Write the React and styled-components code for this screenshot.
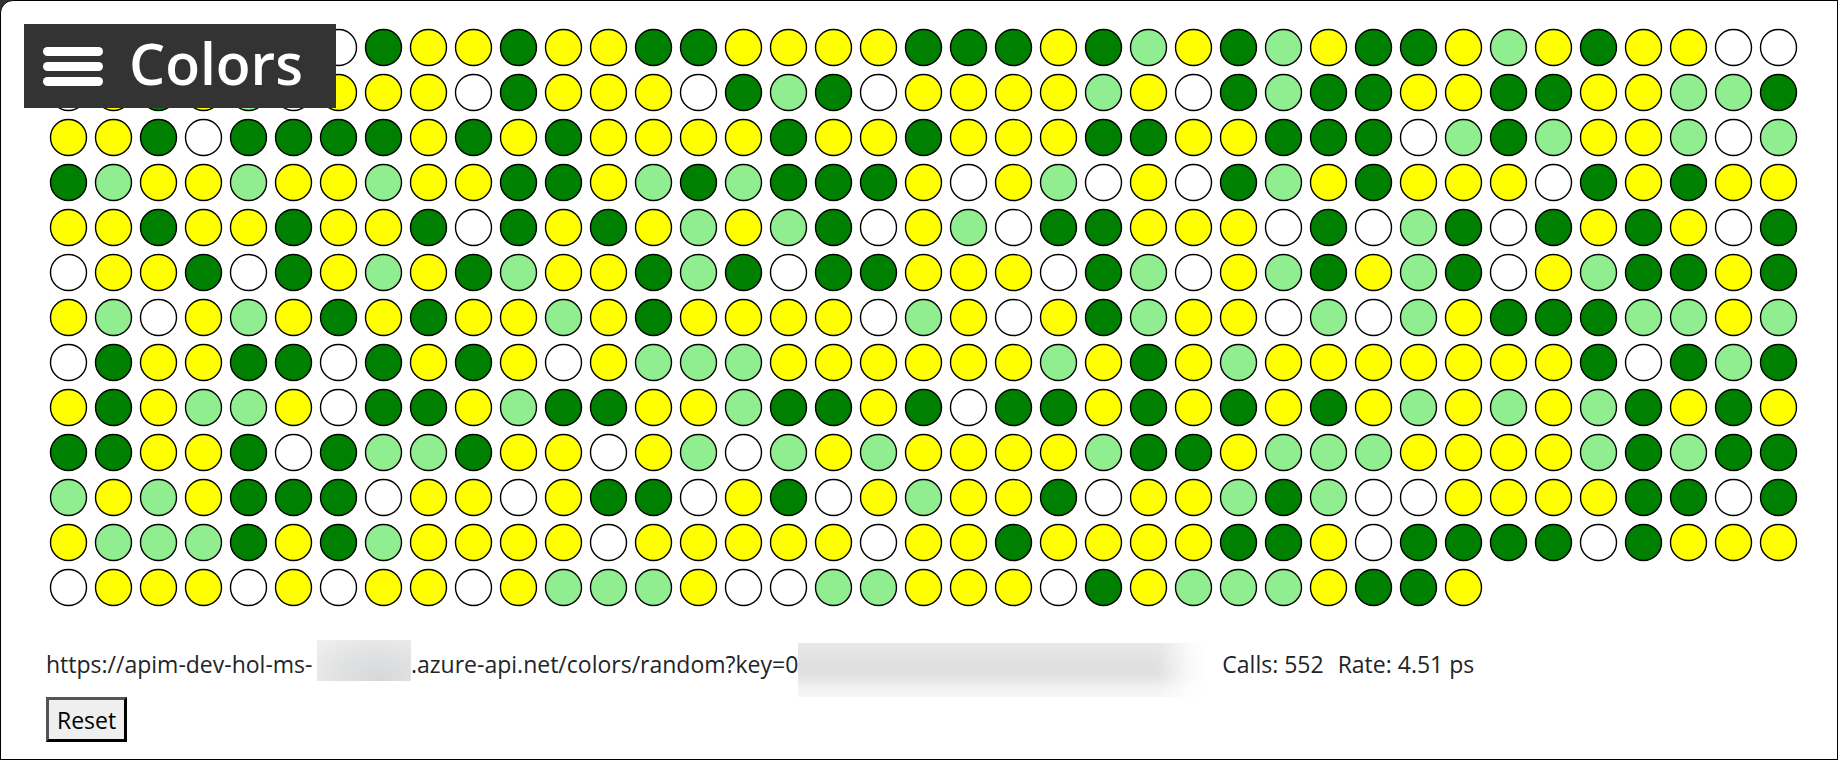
import React, { useState } from "react";
import styled, { createGlobalStyle } from "styled-components";

const FILLS = { Y: "yellow", G: "green", L: "lightgreen", W: "white" };

const SAMPLES = [
  "WYGYLWWGYYGYYGGYYYYGGGYGLYGLYGGYLYGYYWW",
  "WYGYLWYYYWGYYYWGLGWYYYYLYWGLGGYYGGYYLLG",
  "YYGWGGGGYGYGYYYYGYYGYYYGGYYGGGWLGLYYLWL",
  "GLYYLYYLYYGGYLGLGGGYWYLWYWGLYGYYYWGYGYY",
  "YYGYYGYYGWGYGYLYLGWYLWGGYYYWGWLGWGYGYWG",
  "WYYGWGYLYGLYYGLGWGGYYYWGLWYLGYLGWYLGGYG",
  "YLWYLYGYGYYLYGYYYYWLYWYGLYYWLWLYGGGLLYL",
  "WGYYGGWGYGYWYLLLYYYYYYLYGYLYYYYYYYGWGLG",
  "YGYLLYWGGYLGGYYLGGYGWGGYGYGYGYLYLYLGYGY",
  "GGYYGWGLLGYYWYLWLYLYYYYLGGYLLLYYYYLGLGG",
  "LYLYGGGWYYWYGGWYGWYLYYGWYYLGLWWYYYYGGWG",
  "YLLLGYGLYYYYWYYYYYWYYGYYYYGGYWGGGGWGYYY",
  "WYYYWYWYYWYLLLYWWLLYYYWGYLLLYGGY",
].join("");

const GlobalStyle = createGlobalStyle`
  * { box-sizing: border-box; }
  body {
    margin: 0;
    background: #333;
    color: #212529;
    font-family: "Open Sans", "Noto Sans", sans-serif;
    font-size: 23px;
    line-height: 36px;
  }
`;

const Page = styled.div`
  position: relative;
  min-height: 100vh;
  padding: 27px 36px 16px 45px;
  border: 1px solid #000;
  border-top-left-radius: 13px;
  background: #fff;
`;

const Header = styled.header`
  position: absolute;
  top: 23px;
  left: 23px;
  display: flex;
  align-items: center;
  gap: 26px;
  height: 84px;
  padding: 0 33px 0 19px;
  background: #333;
  color: #fff;
`;

const MenuButton = styled.button`
  display: flex;
  flex-direction: column;
  gap: 6px;
  width: 60px;
  padding: 0;
  border: 0;
  background: none;
  cursor: pointer;
`;

const MenuBar = styled.span`
  height: 9px;
  border-radius: 5px;
  background: #fff;
`;

const Title = styled.h1`
  margin: 0;
  padding-bottom: 6px;
  font-size: 57px;
  font-weight: 600;
  line-height: 78px;
`;

const Dots = styled.div`
  display: flex;
  flex-wrap: wrap;
  gap: 6px;
  min-height: 39px;
  padding-left: 3px;
`;

const DotShape = styled.svg`
  width: 39px;
  height: 39px;
  fill: ${({ $fill }) => $fill};
  stroke: #000;
`;

const Status = styled.div`
  display: flex;
  align-items: flex-start;
  margin-top: 33px;
  white-space: nowrap;
`;

const StatusText = styled.span`
  flex: none;
  min-width: 271px;
  padding-top: 6px;
`;

const Stats = styled.div`
  display: flex;
  gap: 14px;
  padding: 6px 0 0 16px;
`;

const HostMask = styled.span`
  flex: none;
  width: 94px;
  height: 41px;
  background: radial-gradient(ellipse at 65% 95%, #d6d8d9, #e0e1e2 45%, #f0f0f0 100%);
`;

const KeyMask = styled.span`
  flex: none;
  width: 408px;
  height: 54px;
  margin-top: 3px;
  background:
    linear-gradient(90deg, transparent 88%, #ffffffd0 96%, #fff 100%),
    linear-gradient(180deg, #e8e8e8, #dfe0e0 45%, #e2e2e2 60%, #f3f3f3 85%, #f6f6f6);
`;

const ResetButton = styled.button`
  display: block;
  height: 45px;
  padding: 0 8px;
  border: 3px outset #000;
  background: #efefef;
  color: #000;
  font: inherit;
`;

function Dot({ fill }) {
  return (
    <DotShape $fill={fill} viewBox="0 0 39 39" aria-hidden="true">
      <circle cx="19.5" cy="19.5" r="18" strokeWidth="1.4" />
    </DotShape>
  );
}

export default function App() {
  const [samples, setSamples] = useState(SAMPLES);
  const [calls, setCalls] = useState(552);
  const [rate, setRate] = useState("4.51");

  const reset = () => {
    setSamples("");
    setCalls(0);
    setRate("0");
  };

  return (
    <>
      <GlobalStyle />
      <Page>
        <Dots>
          {[...samples].map((code, i) => (
            <Dot key={i} fill={FILLS[code]} />
          ))}
        </Dots>
        <Status>
          <StatusText>https://apim-dev-hol-ms-</StatusText>
          <HostMask />
          <StatusText>.azure-api.net/colors/random?key=0</StatusText>
          <KeyMask />
          <Stats>
            <span>Calls: {calls}</span>
            <span>Rate: {rate} ps</span>
          </Stats>
        </Status>
        <ResetButton type="button" onClick={reset}>Reset</ResetButton>
        <Header>
          <MenuButton type="button" aria-label="Menu">
            <MenuBar />
            <MenuBar />
            <MenuBar />
          </MenuButton>
          <Title>Colors</Title>
        </Header>
      </Page>
    </>
  );
}
